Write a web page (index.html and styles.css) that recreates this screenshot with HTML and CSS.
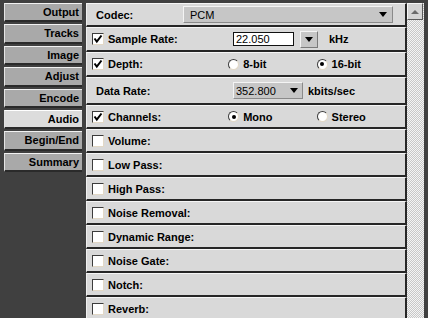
FILE: index.html
```html
<!DOCTYPE html>
<html lang="en">
<head>
    <meta charset="UTF-8">
    <title>Export Settings</title>
    <link rel="stylesheet" href="styles.css">
</head>
<body>
    <div class="window">
        <nav class="tabs">
            <div class="tab">Output</div>
            <div class="tab">Tracks</div>
            <div class="tab">Image</div>
            <div class="tab">Adjust</div>
            <div class="tab">Encode</div>
            <div class="tab active">Audio</div>
            <div class="tab">Begin/End</div>
            <div class="tab">Summary</div>
        </nav>

        <div class="panel">
            <div class="row row-codec">
                <span class="label plain codec-label">Codec:</span>
                <div class="select codec-select"><span>PCM</span><i class="arrow"></i></div>
            </div>

            <div class="row row-tall">
                <span class="check on"><svg viewBox="0 0 10 10"><polyline points="1.5,4.5 3.8,7.5 8.5,1.5"/></svg></span>
                <span class="label">Sample Rate:</span>
                <span class="field">22.050</span>
                <span class="drop-btn"><i class="arrow"></i></span>
                <span class="unit">kHz</span>
            </div>

            <div class="row row-tall">
                <span class="check on"><svg viewBox="0 0 10 10"><polyline points="1.5,4.5 3.8,7.5 8.5,1.5"/></svg></span>
                <span class="label">Depth:</span>
                <span class="opt"><span class="radio"></span>8-bit</span>
                <span class="opt"><span class="radio on"></span>16-bit</span>
            </div>

            <div class="row row-data">
                <span class="label plain">Data Rate:</span>
                <div class="select rate-select"><span>352.800</span><i class="arrow"></i></div>
                <span class="unit">kbits/sec</span>
            </div>

            <div class="row">
                <span class="check on"><svg viewBox="0 0 10 10"><polyline points="1.5,4.5 3.8,7.5 8.5,1.5"/></svg></span>
                <span class="label">Channels:</span>
                <span class="opt"><span class="radio on"></span>Mono</span>
                <span class="opt"><span class="radio"></span>Stereo</span>
            </div>

            <div class="row"><span class="check"></span><span class="label">Volume:</span></div>
            <div class="row"><span class="check"></span><span class="label">Low Pass:</span></div>
            <div class="row"><span class="check"></span><span class="label">High Pass:</span></div>
            <div class="row"><span class="check"></span><span class="label">Noise Removal:</span></div>
            <div class="row"><span class="check"></span><span class="label">Dynamic Range:</span></div>
            <div class="row"><span class="check"></span><span class="label">Noise Gate:</span></div>
            <div class="row"><span class="check"></span><span class="label">Notch:</span></div>
            <div class="row"><span class="check"></span><span class="label">Reverb:</span></div>
        </div>

        <div class="scrollbar">
            <div class="scroll-up"><i class="arrow-up"></i></div>
        </div>
    </div>
</body>
</html>
```

FILE: styles.css
```css
body {
    margin: 0;
    background: #404040;
    font-family: "Liberation Sans", Arial, sans-serif;
    font-size: 11px;
    color: #000;
    overflow: hidden;
}

.window {
    display: flex;
    align-items: flex-start;
    padding-top: 3px;
    height: 315px;
}

/* left tab column */
.tabs {
    width: 78px;
    margin-left: 4px;
    margin-right: 4px;
    display: flex;
    flex-direction: column;
    gap: 2px;
}

.tab {
    box-sizing: border-box;
    height: 19.4px;
    padding-right: 3px;
    background: #a9a9a9;
    border-top: 1px solid #f2f2f2;
    border-left: 1px solid #e4e4e4;
    border-bottom: 2px solid #2a2a2a;
    text-align: right;
    font-weight: bold;
    line-height: 17px;
}

.tab.active {
    background: #dcdcdc;
    border-top-color: #ffffff;
}

/* settings rows */
.panel {
    width: 321px;
    display: flex;
    flex-direction: column;
}

.row {
    box-sizing: border-box;
    height: 24px;
    display: flex;
    align-items: center;
    background: #d9d9d9;
    border-top: 1px solid #f6f6f6;
    border-left: 1px solid #f0f0f0;
    border-bottom: 2px solid #262626;
    border-right: 2px solid #262626;
    font-weight: bold;
}

.row-tall {
    height: 25px;
}

.row-data {
    height: 28px;
}

.check {
    box-sizing: border-box;
    width: 12px;
    height: 12px;
    margin-left: 5px;
    margin-right: 4px;
    background: #fff;
    border: 1px solid;
    border-color: #3c3c3c #e2d8c6 #e2d8c6 #3c3c3c;
    display: flex;
}

.check svg {
    width: 10px;
    height: 10px;
    fill: none;
    stroke: #000;
    stroke-width: 2;
}

.label {
    width: 125px;
}

.label.plain {
    width: 137px;
    margin-left: 9px;
}

.label.codec-label {
    width: 87px;
}

.select {
    box-sizing: border-box;
    height: 17px;
    display: flex;
    align-items: center;
    justify-content: space-between;
    padding: 0 5px 0 6px;
    background: #c6c6c6;
    border: 1px solid;
    border-color: #f4f4f4 #8a8a8a #8a8a8a #f4f4f4;
    font-weight: normal;
}

.codec-select {
    width: 210px;
}

.rate-select {
    width: 70px;
    padding-left: 2px;
    padding-right: 4px;
}

.arrow {
    width: 0;
    height: 0;
    border-left: 4px solid transparent;
    border-right: 4px solid transparent;
    border-top: 5px solid #000;
}

.field {
    box-sizing: border-box;
    width: 61px;
    height: 14px;
    padding-left: 2px;
    background: #fff;
    border: 1px solid #111;
    font-weight: normal;
    line-height: 12px;
}

.drop-btn {
    box-sizing: border-box;
    width: 18px;
    height: 17px;
    margin-left: 6px;
    display: flex;
    align-items: center;
    justify-content: center;
    background: #c6c6c6;
    border: 1px solid;
    border-color: #f4f4f4 #7a7a7a #7a7a7a #f4f4f4;
}

.unit {
    margin-left: 11px;
}

.rate-select + .unit {
    margin-left: 5px;
}

.opt {
    width: 92px;
    display: flex;
    align-items: center;
}

.radio {
    box-sizing: border-box;
    width: 11px;
    height: 11px;
    margin-right: 4px;
    border-radius: 50%;
    background: #fff;
    border: 1px solid;
    border-color: #3c3c3c #e2d8c6 #e2d8c6 #3c3c3c;
    display: flex;
    align-items: center;
    justify-content: center;
}

.radio.on::after {
    content: "";
    width: 4px;
    height: 4px;
    border-radius: 50%;
    background: #000;
}

/* scrollbar */
.scrollbar {
    width: 17px;
    height: 315px;
    background: repeating-conic-gradient(#c8c8c8 0 25%, #f4f4f4 0 50%) 0 0 / 2px 2px;
}

.scroll-up {
    box-sizing: border-box;
    width: 16px;
    height: 17px;
    display: flex;
    align-items: center;
    justify-content: center;
    background: #d4d4d4;
    border: 1px solid;
    border-color: #f6f6f6 #5a5a5a #5a5a5a #f6f6f6;
}

.arrow-up {
    width: 0;
    height: 0;
    border-left: 4px solid transparent;
    border-right: 4px solid transparent;
    border-bottom: 4px solid #6a6a6a;
}
```
